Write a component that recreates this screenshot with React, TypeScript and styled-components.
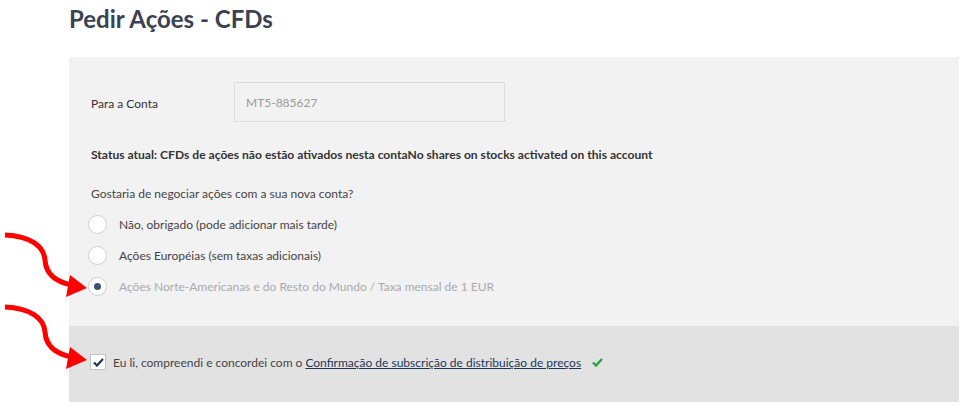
import React from "react";
import styled, { createGlobalStyle } from "styled-components";

const Global = createGlobalStyle`
  html, body { margin: 0; padding: 0; background: #ffffff; }
  body { font-family: Lato, "Open Sans", sans-serif; color: #333; }
`;

const Page = styled.div`
  position: relative;
  width: 965px;
  height: 408px;
  padding: 0 6px 0 69px;
  box-sizing: border-box;
  overflow: hidden;
`;

const Title = styled.h1`
  margin: 0;
  padding-top: 4px;
  height: 57px;
  box-sizing: border-box;
  font-size: 24px;
  font-weight: 700;
  color: #3b4252;
  line-height: 30px;
`;

const Panel = styled.div`
  display: flex;
  flex-direction: column;
`;

const Upper = styled.div`
  background: #f2f2f2;
  padding: 25px 22px 0 22px;
  height: 269px;
  box-sizing: border-box;
  display: flex;
  flex-direction: column;
`;

const Lower = styled.div`
  background: #e2e2e2;
  height: 76px;
  box-sizing: border-box;
  padding: 0 22px 4px 21px;
  display: flex;
  align-items: center;
`;

const FieldRow = styled.div`
  display: flex;
  align-items: center;
  height: 40px;
`;

const Label = styled.div`
  width: 143px;
  padding-top: 3px;
  font-size: 12px;
  color: #333;
`;

const Input = styled.div`
  width: 271px;
  height: 40px;
  box-sizing: border-box;
  border: 1px solid #dcdcdc;
  padding: 0 11px;
  display: flex;
  align-items: center;
  font-size: 12px;
  color: #9a9a9a;
`;

const Status = styled.div`
  margin-top: 24px;
  font-size: 12.1px;
  font-weight: 700;
  color: #333;
  line-height: 18px;
`;

const Question = styled.div`
  margin-top: 21px;
  font-size: 12px;
  color: #444;
  line-height: 18px;
`;

const Options = styled.div`
  margin-top: 12px;
  display: flex;
  flex-direction: column;
  gap: 12px;
`;

const Option = styled.label<{ $disabled?: boolean }>`
  display: flex;
  align-items: center;
  gap: 12px;
  height: 19px;
  margin-left: -3px;
  font-size: 12px;
  color: ${(p) => (p.$disabled ? "#aaaaaa" : "#444")};
`;

const Radio = styled.span<{ $checked?: boolean }>`
  width: 19px;
  height: 19px;
  box-sizing: border-box;
  border-radius: 50%;
  border: 1px solid #cfcfcf;
  background: #ffffff;
  display: flex;
  align-items: center;
  justify-content: center;
  &::after {
    content: "";
    width: 7px;
    height: 7px;
    border-radius: 50%;
    background: ${(p) => (p.$checked ? "#3d5275" : "transparent")};
  }
`;

const Agree = styled.div`
  display: flex;
  align-items: center;
  font-size: 12px;
  color: #444;
`;

const Box = styled.span`
  width: 16px;
  height: 16px;
  box-sizing: border-box;
  border: 1px solid #c4c4c4;
  background: #ffffff;
  display: flex;
  align-items: center;
  justify-content: center;
  margin-right: 7px;
`;

const Link = styled.a`
  color: #1d3657;
  text-decoration: underline;
  margin-left: 3px;
`;

const OkMark = styled.svg`
  margin-left: 11px;
`;

const Arrows = styled.svg`
  position: absolute;
  left: 0;
  top: 0;
  pointer-events: none;
`;

function CurvedArrow({ dy }: { dy: number }) {
  return (
    <g transform={`translate(0 ${dy})`}>
      <path
        d="M5 235 C30 236 44 246 45 260 C46 275 56 282 72 285"
        fill="none"
        stroke="#ff0000"
        strokeWidth={5}
        strokeLinecap="butt"
      />
      <polygon points="87,288 70,275 66,297" fill="#ff0000" />
    </g>
  );
}

export default function App() {
  return (
    <>
      <Global />
      <Page>
        <Title>Pedir Ações - CFDs</Title>
        <Panel>
          <Upper>
            <FieldRow>
              <Label>Para a Conta</Label>
              <Input>MT5-885627</Input>
            </FieldRow>
            <Status>
              Status atual: CFDs de ações não estão ativados nesta contaNo shares on stocks activated on this account
            </Status>
            <Question>Gostaria de negociar ações com a sua nova conta?</Question>
            <Options>
              <Option>
                <Radio />
                Não, obrigado (pode adicionar mais tarde)
              </Option>
              <Option>
                <Radio />
                Ações Européias (sem taxas adicionais)
              </Option>
              <Option $disabled>
                <Radio $checked />
                Ações Norte-Americanas e do Resto do Mundo / Taxa mensal de 1 EUR
              </Option>
            </Options>
          </Upper>
          <Lower>
            <Agree>
              <Box>
                <svg width="11" height="9" viewBox="0 0 11 9">
                  <path d="M1 4.5 L4 7.5 L10 1" fill="none" stroke="#1d3461" strokeWidth="2.2" />
                </svg>
              </Box>
              Eu li, compreendi e concordei com o
              <Link>Confirmação de subscrição de distribuição de preços</Link>
              <OkMark width="11" height="9" viewBox="0 0 11 9">
                <path d="M1 4.5 L4 7.5 L10 1" fill="none" stroke="#2ea043" strokeWidth="2.4" />
              </OkMark>
            </Agree>
          </Lower>
        </Panel>
        <Arrows width="965" height="408" viewBox="0 0 965 408">
          <CurvedArrow dy={0} />
          <CurvedArrow dy={72} />
        </Arrows>
      </Page>
    </>
  );
}
